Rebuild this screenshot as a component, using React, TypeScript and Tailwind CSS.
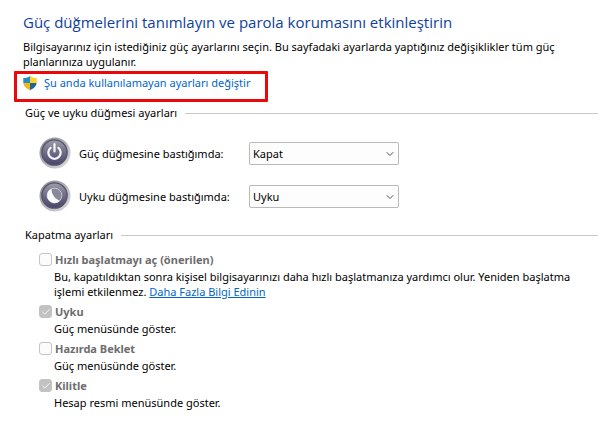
import { Check, ChevronDown } from "lucide-react";
import type { ReactNode } from "react";

interface ButtonSettingProps {
  id: string;
  icon: ReactNode;
  label: string;
  value: string;
  options: string[];
}

interface ShutdownOptionProps {
  id: string;
  label: string;
  checked?: boolean;
  children: ReactNode;
}

const ShieldIcon = () => (
  <svg viewBox="0 0 14 14" className="h-[14px] w-[14px] shrink-0" aria-hidden="true">
    <defs>
      <clipPath id="shield">
        <path d="M7 0 C5.2 1.4 3 2 0.3 2 V6 C0.3 10 3.2 12.6 7 14 C10.8 12.6 13.7 10 13.7 6 V2 C11 2 8.8 1.4 7 0Z" />
      </clipPath>
    </defs>
    <g clipPath="url(#shield)">
      <rect width="7" height="7" fill="#2b8cc4" />
      <rect x="7" width="7" height="7" fill="#fcd425" />
      <rect y="7" width="7" height="7" fill="#efb91d" />
      <rect x="7" y="7" width="7" height="7" fill="#1c6698" />
    </g>
  </svg>
);

// Round metallic button shared by the power and sleep icons
const RoundIcon = ({ id, children }: { id: string; children: ReactNode }) => (
  <svg viewBox="0 0 32 32" className="h-8 w-8 shrink-0" aria-hidden="true">
    <defs>
      <linearGradient id={`${id}-rim`} x1="0" y1="0" x2="1" y2="1">
        <stop offset="0" stopColor="#85858b" />
        <stop offset="0.5" stopColor="#b2b2b8" />
        <stop offset="1" stopColor="#dedee2" />
      </linearGradient>
      <linearGradient id={`${id}-face`} x1="0" y1="0" x2="0" y2="1">
        <stop offset="0" stopColor="#9c9cab" />
        <stop offset="0.5" stopColor="#6f6d87" />
        <stop offset="1" stopColor="#48446b" />
      </linearGradient>
    </defs>
    <circle cx="16" cy="16" r="15.5" fill={`url(#${id}-rim)`} />
    <circle cx="15.5" cy="15.5" r="12.6" fill={`url(#${id}-face)`} stroke="#55536b" strokeWidth="1.4" />
    {children}
  </svg>
);

const PowerIcon = () => (
  <RoundIcon id="power">
    <path d="M11.6 10.8 A6.2 6.2 0 1 0 19.4 10.8" fill="none" stroke="#f6f6fa" strokeWidth="2.2" strokeLinecap="round" />
    <path d="M15.5 7.2 V14.5" stroke="#f6f6fa" strokeWidth="2.2" strokeLinecap="round" />
  </RoundIcon>
);

const SleepIcon = () => (
  <RoundIcon id="sleep">
    <circle cx="15.5" cy="15.5" r="7.4" fill="#8a889b" stroke="#c9c8d3" strokeWidth="1" />
    <path d="M12.4 8.8 A7.4 7.4 0 1 0 20.8 20.7 C16.5 19.4 12.6 14.8 12.4 8.8Z" fill="#fbfbfd" />
  </RoundIcon>
);

const SectionTitle = ({ children }: { children: ReactNode }) => (
  <div className="flex items-center gap-2 pl-[2px]">
    <h2 className="whitespace-nowrap leading-4">{children}</h2>
    <div className="h-px flex-1 bg-[#c8c8c8]" />
  </div>
);

const ButtonSetting = ({ id, icon, label, value, options }: ButtonSettingProps) => (
  <div className="flex items-center">
    {icon}
    <label htmlFor={id} className="w-[178px] pl-2 whitespace-nowrap">
      {label}
    </label>
    <div className="relative w-[150px]">
      <select
        id={id}
        defaultValue={value}
        className="block h-[23px] w-full appearance-none rounded-[2px] border border-[#bababa] bg-[#fdfdfd] pl-[3px] pr-5 text-black"
      >
        {options.map((option) => (
          <option key={option}>{option}</option>
        ))}
      </select>
      <ChevronDown
        className="pointer-events-none absolute top-[6px] right-[3px] h-3 w-3 text-[#555]"
        strokeWidth={2}
      />
    </div>
  </div>
);

const ShutdownOption = ({ id, label, checked = false, children }: ShutdownOptionProps) => (
  <li>
    <div className="flex items-center gap-[3px]">
      <div className="grid h-[13px] w-[13px] place-items-center">
        <input
          id={id}
          type="checkbox"
          defaultChecked={checked}
          disabled
          className="col-start-1 row-start-1 h-[13px] w-[13px] appearance-none rounded-[3px] border border-[#c4c4c4] bg-[#fbfbfb] checked:bg-[#c2c2c2]"
        />
        {checked && <Check className="col-start-1 row-start-1 h-[10px] w-[10px] text-white" strokeWidth={2} />}
      </div>
      <label htmlFor={id} className="font-bold leading-[17px] text-[#6d6d6d]">
        {label}
      </label>
    </div>
    <p className="pt-[1px] pb-[4px] pl-[15px]">{children}</p>
  </li>
);

export default function App() {
  return (
    <main className="min-h-screen bg-white pt-3 pr-[7px] pl-[14px] font-['Noto_Sans','Open_Sans',sans-serif] text-[11px] leading-[15px] text-black">
      <header className="pl-[9px]">
        <h1 className="font-['Open_Sans','Noto_Sans',sans-serif] text-[15px] leading-5 text-[#0f419b]">
          Güç düğmelerini tanımlayın ve parola korumasını etkinleştirin
        </h1>
        <p className="pt-[7px] pr-5 pb-[2px]">
          Bilgisayarınız için istediğiniz güç ayarlarını seçin. Bu sayfadaki ayarlarda yaptığınız değişiklikler tüm güç
          planlarınıza uygulanır.
        </p>
      </header>

      <div className="h-[31px] w-[254px] rounded-[1px] border-3 border-[#ec0808] pt-[1px] pl-[6px]">
        <a href="#ayarlar" className="flex items-center gap-[7px] whitespace-nowrap leading-4 text-[#0066cc]">
          <ShieldIcon />
          Şu anda kullanılamayan ayarları değiştir
        </a>
      </div>

      <section className="pt-[3px] pl-[9px]">
        <SectionTitle>Güç ve uyku düğmesi ayarları</SectionTitle>
        <div className="flex flex-col gap-[11px] pt-4 pl-4">
          <ButtonSetting
            id="guc"
            icon={<PowerIcon />}
            label="Güç düğmesine bastığımda:"
            value="Kapat"
            options={["Hiçbir şey yapma", "Uyku", "Kapat"]}
          />
          <ButtonSetting
            id="uyku-dugmesi"
            icon={<SleepIcon />}
            label="Uyku düğmesine bastığımda:"
            value="Uyku"
            options={["Hiçbir şey yapma", "Uyku", "Kapat"]}
          />
        </div>
      </section>

      <section className="pt-[15px] pl-[9px]">
        <SectionTitle>Kapatma ayarları</SectionTitle>
        <ul className="pt-2 pl-4">
          <ShutdownOption id="hizli" label="Hızlı başlatmayı aç (önerilen)">
            Bu, kapatıldıktan sonra kişisel bilgisayarınızı daha hızlı başlatmanıza yardımcı olur. Yeniden başlatma
            işlemi etkilenmez.{" "}
            <a href="#bilgi" className="text-[#0066cc] underline">
              Daha Fazla Bilgi Edinin
            </a>
          </ShutdownOption>
          <ShutdownOption id="uyku" label="Uyku" checked>
            Güç menüsünde göster.
          </ShutdownOption>
          <ShutdownOption id="beklet" label="Hazırda Beklet">
            Güç menüsünde göster.
          </ShutdownOption>
          <ShutdownOption id="kilitle" label="Kilitle" checked>
            Hesap resmi menüsünde göster.
          </ShutdownOption>
        </ul>
      </section>
    </main>
  );
}
